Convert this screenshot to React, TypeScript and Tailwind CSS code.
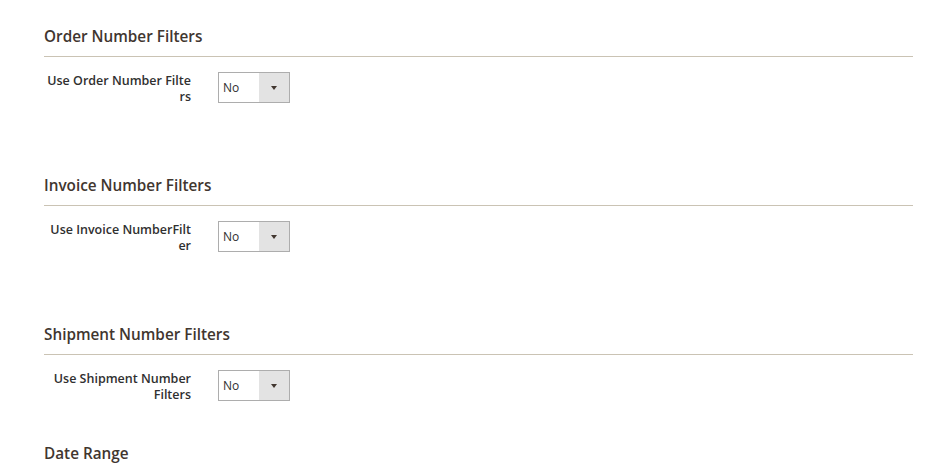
const sections = [
  { title: "Order Number Filters", label: ["Use Order Number Filte", "rs"] },
  { title: "Invoice Number Filters", label: ["Use Invoice NumberFilt", "er"] },
  { title: "Shipment Number Filters", label: ["Use Shipment Number", "Filters"] },
];

function Select() {
  return (
    <div className="flex h-[31px] w-[72px] border border-[#adadad] bg-white">
      <div className="flex flex-1 items-center pl-[4px] text-[12px] text-[#303030]">No</div>
      <div className="flex w-[30px] items-center justify-center bg-[#e3e3e3]">
        <span className="h-0 w-0 border-x-[3.5px] border-t-[4px] border-x-transparent border-t-[#41362f]" />
      </div>
    </div>
  );
}

export default function App() {
  return (
    <div
      className="h-[470px] overflow-hidden bg-white pl-[44px] pr-[25px] pt-[26px]"
      style={{ fontFamily: '"Open Sans", sans-serif' }}
    >
      {sections.map((s) => (
        <section key={s.title} className="mb-[72px]">
          <h2 className="border-b border-[#cac3b4] pb-[10px] text-[15.3px] font-semibold leading-[20px] text-[#41362f]">
            {s.title}
          </h2>
          <div className="mt-[15px] flex h-[31px] items-start gap-[27px]">
            <label className="flex w-[147px] flex-col pt-[1px] text-right text-[12.5px] font-semibold leading-[16px] text-[#303030]">
              {s.label.map((l) => (
                <span key={l}>{l}</span>
              ))}
            </label>
            <Select />
          </div>
        </section>
      ))}
      <h2 className="-mt-[30px] text-[15.3px] font-semibold leading-[20px] text-[#41362f]">Date Range</h2>
    </div>
  );
}
